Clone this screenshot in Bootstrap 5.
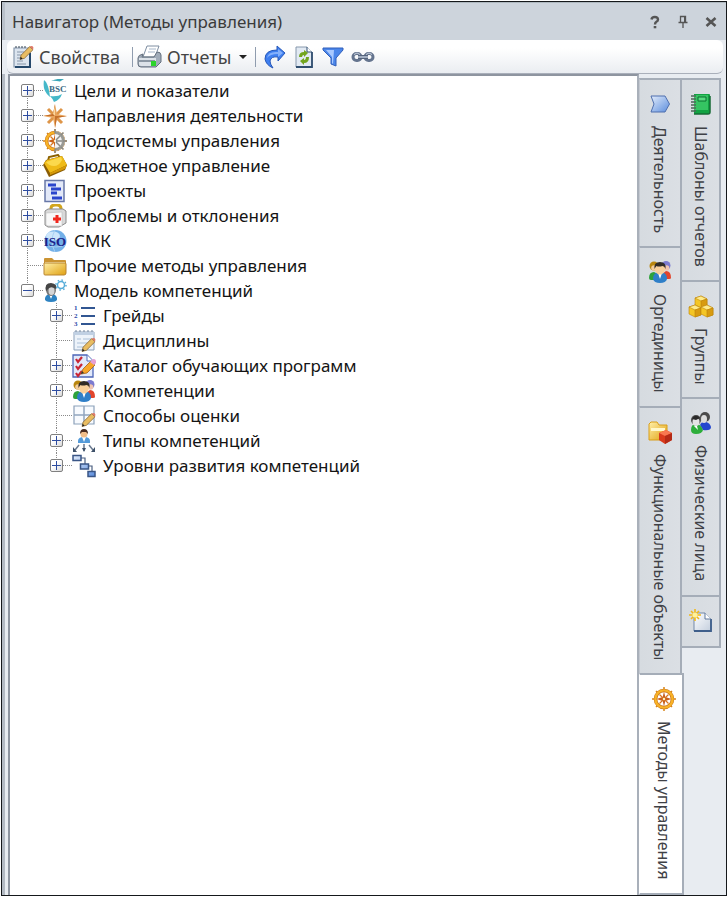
<!DOCTYPE html>
<html lang="ru">
<head>
<meta charset="utf-8">
<meta name="viewport" content="width=device-width, initial-scale=1">
<title>Навигатор (Методы управления)</title>
<link href="https://cdn.jsdelivr.net/npm/bootstrap@5.3.0/dist/css/bootstrap.min.css" rel="stylesheet">
<style>
body { font-family: "Noto Sans", "Open Sans", sans-serif; font-size: 17px; line-height: 24px; padding: 1px; background: #fff; }
.nav-window { min-height: calc(100vh - 3px); border: 1px solid #15181b; background: #e8ecf1; }
.title-bar { height: 38px; padding: 0 9px 0 7px; background: #cdd4dc; border-left: 3px solid #b9c1ca; border-top: 1px solid #aeb8bf; color: #3b3b3b; }
.title-bar h1 { font-size: 17px; line-height: 24px; font-weight: 400; }
.flat-btn { border: 0; background: none; padding: 0; color: inherit; }
.tools { height: 34px; margin: 0 3px 0 5px; padding: 0 5px; background: linear-gradient(#fff 25%, #eaedf1); border-bottom: 1px solid #a9afba; border-radius: 6px; color: #444; font-size: 18px; }
.tool-icons { gap: 7px; }
.rule { width: 1px; height: 20px; margin-left: 12px; background: #8f9cae; }
.rule-tight { margin-left: 8px; }
.work { padding-left: 6px; border-left: 0; background: linear-gradient(90deg, #b3bac3 0 3px, #e8ecf1 3px); }
.tree-pane { background: #fff; border: 2px solid #8e95a0; border-right-color: #a9b0ba; border-bottom: 0; padding: 2px 0 0 11px; color: #141414; }
.tree-row { height: 25px; }
.tree-row > svg { margin-right: 7px; }
.sub-tree { padding-left: 29px; }
.branch { width: 22px; height: 25px;
  background:
    repeating-linear-gradient(90deg, #8a8a8a 0 1px, transparent 1px 2px) 7px 12px / 15px 1px no-repeat,
    repeating-linear-gradient(#8a8a8a 0 1px, transparent 1px 2px) 6px 0 / 1px 25px no-repeat; }
.branch-first { background-position: 7px 12px, 6px 12px; }
.branch-last { background-size: 15px 1px, 1px 12px; }
.fold { width: 13px; height: 13px; border: 1px solid #808080; border-radius: 2px; padding: 0;
  background:
    linear-gradient(#2d4ca0, #2d4ca0) center / 9px 1px no-repeat,
    linear-gradient(135deg, #fff 40%, #d8d8d8); }
.fold-plus { background:
    linear-gradient(#2d4ca0, #2d4ca0) center / 9px 1px no-repeat,
    linear-gradient(#2d4ca0, #2d4ca0) center / 1px 9px no-repeat,
    linear-gradient(135deg, #fff 40%, #d8d8d8); }
.tab-strip { padding-top: 4px; }
.side-tab { width: 40px; padding: 12px 0 13px; gap: 10px; border: 2px solid #a5adb8; border-bottom-width: 0; border-left-width: 1px; background: linear-gradient(90deg, #d6dbe0, #dbdfe4); color: #3f4146; font-size: 16px; line-height: 20px; }
.side-tab:last-child { border-bottom-width: 2px; }
.strip-inner .side-tab { width: 43px; border-left-color: #c3c8d0; }
.strip-inner .side-tab-active { width: 45px; background: #fff; padding-left: 6px; border-left-color: #fff; }
.strip-outer { margin-left: -3px; padding-right: 5px; }
.upright { writing-mode: vertical-rl; }
</style>
<script src="https://cdn.jsdelivr.net/npm/bootstrap@5.3.0/dist/js/bootstrap.bundle.min.js"></script>
</head>
<body>
<svg width="0" height="0" class="position-absolute" aria-hidden="true">
  <defs>
    <linearGradient id="gGold" x1="0" y1="0" x2="1" y2="1"><stop offset="0" stop-color="#fff0a8"/><stop offset="1" stop-color="#e0a010"/></linearGradient>
    <linearGradient id="gBlue" x1="0" y1="0" x2="1" y2="1"><stop offset="0" stop-color="#e2ecfb"/><stop offset="1" stop-color="#5b8ddd"/></linearGradient>
    <linearGradient id="gPage" x1="0" y1="0" x2="1" y2="1"><stop offset="0" stop-color="#fff"/><stop offset="1" stop-color="#c3cedd"/></linearGradient>
  </defs>
  <symbol id="people" viewBox="0 0 24 24">
    <path d="M1 18q0-6 5-6l4 2v6H3q-2 0-2-2z" fill="#2ea23c"/><path d="M23 18q0-7-5-7l-4 3v5h7q2 0 2-1z" fill="#e2452c"/>
    <circle cx="6" cy="6" r="4.500" fill="#b8860f"/><circle cx="18" cy="5.500" r="4.500" fill="#7c7bd0"/>
    <circle cx="6" cy="8" r="2.800" fill="#f2cc9c"/><circle cx="18.500" cy="8" r="2.800" fill="#f0c4b0"/>
    <path d="M5 19q0-7 7-7t7 7q-1 4-7 4t-7-4z" fill="#2f7fc8"/><path d="M10 13h4l-2 6z" fill="#fff"/>
    <ellipse cx="12" cy="9" rx="5" ry="5.500" fill="#f8cf9a"/><path d="M6.500 9q-1-7 5.500-7t5.500 7q-1-3-3-3-4 1-6 0-1 1-2 3z" fill="#302b26"/>
  </symbol>
  <symbol id="helm" viewBox="0 0 24 24">
    <path d="M12 0v24M0 12h24M4 4l16 16M20 4 4 20" stroke="#d9861c" stroke-width="1.500"/>
    <circle cx="12" cy="12" r="8.500" fill="#fff" stroke="#c9761a" stroke-width="3.600"/><circle cx="12" cy="12" r="8.600" fill="none" stroke="#f8b226" stroke-width="2.400"/>
    <path d="M12 4.500l1.300 5.500 6.200 2-6.200 2L12 19.500 10.700 14l-6.200-2 6.200-2z" fill="#c8601c"/>
    <path d="M7.500 7.500l9 9M16.500 7.500l-9 9" stroke="#d8741e" stroke-width="1.200"/><circle cx="12" cy="12" r="1.200" fill="#fff2c0"/>
  </symbol>
  <symbol id="pencil" viewBox="0 0 14 14">
    <path d="M1 13l1-4 8-8 3 3-8 8z" fill="#e9bd62" stroke="#8c6a35" stroke-width=".8"/><path d="M10 1q2-1 3 0t0 3z" fill="#e07868"/><path d="M1 13l.6-2.400L3.400 12.400z" fill="#222"/>
  </symbol>
</svg>

<main class="nav-window d-flex flex-column">
  <header class="title-bar d-flex align-items-center">
    <h1 class="mb-0 me-auto">Навигатор (Методы управления)</h1>
    <div class="d-flex align-items-center gap-3">
      <button class="flat-btn d-flex" aria-label="Справка"><svg width="12" height="16" viewBox="0 0 12 16"><path d="M2.500 5.500q.3-2.500 3.300-2.500T9 5.500Q9 7 7.400 7.800 6 8.600 6 10.500" fill="none" stroke="#555" stroke-width="2.400"/><path d="M4.700 12h2.600v2.300H4.700z" fill="#555"/></svg></button>
      <button class="flat-btn d-flex" aria-label="Закрепить"><svg width="12" height="16" viewBox="0 0 12 16"><path d="M3.500 8V2.500h5V8M1.500 8.500h9M6 9v5" fill="none" stroke="#555" stroke-width="1.300"/><path d="M7 2.500h2V8H7z" fill="#555"/></svg></button>
      <button class="flat-btn d-flex" aria-label="Закрыть"><svg width="12" height="16" viewBox="0 0 12 16"><path d="M1.500 4l9 8M10.500 4l-9 8" stroke="#555" stroke-width="2.600"/></svg></button>
    </div>
  </header>

  <div class="tools d-flex align-items-center" role="toolbar" aria-label="Инструменты">
    <button class="flat-btn d-flex align-items-center gap-1">
      <svg width="23" height="24" viewBox="0 0 23 24"><path d="M2 3h16v19H2z" fill="#dce5ef" stroke="#8798ad" stroke-width="1.200"/><path d="M4 3V1M7 3V1M10 3V1M13 3V1" stroke="#345"/><path d="M5 7h7M5 10h5M5 13h5M5 16h6M5 19h9" stroke="#8796a9"/><path d="M18 8v14H3" fill="none" stroke="#25486b" stroke-width="2"/><use href="#pencil" x="7" y="0" width="15" height="16"/></svg>
      <span>Свойства</span>
    </button>
    <span class="rule"></span>
    <button class="flat-btn d-flex align-items-center gap-1 ms-1">
      <svg width="26" height="24" viewBox="0 0 26 24"><path d="M10 1h12l-4 11H6z" fill="#fff" stroke="#7e8ea1"/><path d="M12 4h7M11 7h7" stroke="#a6b6c9"/><path d="M1 13q0-3 5-4l-1 3h12l3-5q4 0 4 3v7l-5 5H4q-3 0-3-3z" fill="#a1acb9" stroke="#65707e"/><path d="M2 13h17v8H4q-2 0-2-2z" fill="#dce2e8"/><path d="M2 16h16" stroke="#717e8d" stroke-width="1.500"/><path d="M14 16h5v5h-5z" fill="#2bd52b"/></svg>
      <span>Отчеты</span>
      <svg class="ms-1" width="8" height="6" viewBox="0 0 8 6"><path d="M0 1h8L4 5z" fill="#222"/></svg>
    </button>
    <span class="rule rule-tight"></span>
    <div class="tool-icons d-flex align-items-center ms-2">
      <button class="flat-btn d-flex" aria-label="Перейти"><svg width="22" height="24" viewBox="0 0 22 24"><path d="M13 1l8 7-7 8v-4q-7-1-8 4 0 3 3 7-7-3-8-9 0-9 12-9z" fill="#3f7ff0" stroke="#2758b8"/><path d="M14 4l5 4-5 4V9q-8 0-11 4Q4 6 14 7z" fill="#84b0fb"/></svg></button>
      <button class="flat-btn d-flex" aria-label="Обновить"><svg width="22" height="24" viewBox="0 0 22 24"><path d="M3 2h11l5 5v15H3z" fill="#e2eaf3" stroke="#8798ad"/><path d="M19 7v15H3" fill="none" stroke="#314f70" stroke-width="1.800"/><path d="M14 2v5h5" fill="#fff" stroke="#314f70"/><path d="M6 12q0-5 5-5V5l4 3-4 4v-2q-2 0-2 2zM16 12q0 6-5 6v2l-4-4 4-3v2q2 0 2-3z" fill="#72a51e"/></svg></button>
      <button class="flat-btn d-flex" aria-label="Фильтр"><svg width="22" height="24" viewBox="0 0 22 24"><path d="M1 3h20v2l-7 8v8l-5-2v-6L1 5z" fill="#4b86ea" stroke="#315fba"/><path d="M4 5h8l-1 14-1-1v-6z" fill="#a9c9ff"/></svg></button>
      <button class="flat-btn d-flex" aria-label="Связь"><svg width="24" height="24" viewBox="0 0 24 24"><g fill="none" stroke="#65758f" stroke-width="3"><rect x="2" y="8.500" width="8" height="7" rx="3.500"/><rect x="14" y="8.500" width="8" height="7" rx="3.500"/></g><path d="M7 12h10" stroke="#56647c" stroke-width="4"/><path d="M7 12h10" stroke="#a3afc2" stroke-width="2"/><path d="M3 9.500q3-3 6 0M15 9.500q3-3 6 0" fill="none" stroke="#c8d0de"/></svg></button>
    </div>
  </div>

  <div class="work d-flex flex-grow-1">
    <section class="tree-pane flex-grow-1" aria-label="Дерево">
      <ul class="list-unstyled mb-0">
        <li class="tree-row d-flex align-items-center"><span class="branch branch-first d-flex align-items-center"><button class="fold fold-plus" aria-label="Развернуть"></button></span>
          <svg width="24" height="24" viewBox="0 0 24 24"><path d="M1 1q-2 11 6 17-1-10-4-15z" fill="#45b8c9"/><path d="M8 2q7-3 13-2l-4 2.500q-5-1-9-.5z" fill="#3aa6b8"/><path d="M7 17q8 1 12-2-2 6-8 8-1-3-4-6z" fill="#45b8c9"/><text x="6" y="13" font-family="Liberation Serif, serif" font-size="9" font-weight="700" fill="#3c6a84">BSC</text></svg>
          <span>Цели и показатели</span></li>
        <li class="tree-row d-flex align-items-center"><span class="branch d-flex align-items-center"><button class="fold fold-plus" aria-label="Развернуть"></button></span>
          <svg width="24" height="24" viewBox="0 0 24 24"><path d="M5 5l14 14M19 5 5 19" stroke="#de9548" stroke-width="3"/><path d="M12 0l2 10 10 2-10 2-2 10-2-10-10-2 10-2z" fill="#e8a45c"/><path d="M12 0v12h12l-10 2-2 10V12H0l10-2z" fill="#c5702b"/><path d="M12 12V2l-2 8z" fill="#fbd79e"/></svg>
          <span>Направления деятельности</span></li>
        <li class="tree-row d-flex align-items-center"><span class="branch d-flex align-items-center"><button class="fold fold-plus" aria-label="Развернуть"></button></span>
          <svg width="24" height="24" viewBox="0 0 24 24"><use href="#helm" width="24" height="24"/><path d="M12 2a10 10 0 0 1 0 20z" fill="#f4f4f4"/><path d="M12 3.500a8.500 8.500 0 0 1 0 17" fill="none" stroke="#9a9a94" stroke-width="3"/><path d="M12 0v4M18 6l2.500-2.500M20 12h4M18 18l2.500 2.500M12 20v4M13 11l4-4M13 12h6M13 13l4 4" stroke="#8b8b86" stroke-width="1.500"/></svg>
          <span>Подсистемы управления</span></li>
        <li class="tree-row d-flex align-items-center"><span class="branch d-flex align-items-center"><button class="fold fold-plus" aria-label="Развернуть"></button></span>
          <svg width="24" height="24" viewBox="0 0 24 24"><path d="M5 7l1-4 9-2 3 4" fill="none" stroke="#8c6100" stroke-width="2"/><path d="M0 11L3 6l16-4 5 9-2 5-16 7z" fill="#8a5d05"/><path d="M1 9l3-3 15-4 5 9-17 8z" fill="#efbb18"/><path d="M3 8l15-5 1 3q-3 6-8 6Q6 12 3 8z" fill="#fbd94c"/><path d="M7 19l17-8-2 4-15 6z" fill="#d69a08"/></svg>
          <span>Бюджетное управление</span></li>
        <li class="tree-row d-flex align-items-center"><span class="branch d-flex align-items-center"><button class="fold fold-plus" aria-label="Развернуть"></button></span>
          <svg width="24" height="24" viewBox="0 0 24 24"><path d="M2 1.500h19v21H2z" fill="#e3e9f8" stroke="#6878a8" stroke-width="1.500"/><path d="M5 6h8M8 10h10M8 14h6M9 19h10" stroke="#2b45cc" stroke-width="3"/></svg>
          <span>Проекты</span></li>
        <li class="tree-row d-flex align-items-center"><span class="branch d-flex align-items-center"><button class="fold fold-plus" aria-label="Развернуть"></button></span>
          <svg width="24" height="24" viewBox="0 0 24 24"><path d="M8 7V4q0-3 4-3h2q4 0 4 4v2" fill="none" stroke="#d2a51c" stroke-width="3"/><path d="M2 7l3-2h15l3 2v12l-7 4H5l-3-2z" fill="#d9d9d9" stroke="#8b8b8b"/><path d="M3 9l16-1v14H5l-2-1z" fill="#f8f8f8" stroke="#b5b5b5" stroke-width=".5"/><path d="M14 11v8M10 15h8" stroke="#f0281e" stroke-width="3"/></svg>
          <span>Проблемы и отклонения</span></li>
        <li class="tree-row d-flex align-items-center"><span class="branch d-flex align-items-center"><button class="fold fold-plus" aria-label="Развернуть"></button></span>
          <svg width="24" height="24" viewBox="0 0 24 24"><circle cx="12.500" cy="12" r="11" fill="#73b0e8"/><ellipse cx="10" cy="7" rx="7" ry="4.500" fill="#cde6fb"/><path d="M3 16q10 4 19 0M12 1q-6 11 0 22" fill="none" stroke="#a7d1f4"/><text x="12" y="17" text-anchor="middle" font-family="Liberation Serif, serif" font-size="13" font-weight="700" fill="#1d1f8a">ISO</text></svg>
          <span>СМК</span></li>
        <li class="tree-row d-flex align-items-center"><span class="branch"></span>
          <svg width="24" height="24" viewBox="0 0 24 24"><path d="M1 5q0-1 1-1h7l2 2h11q1 0 1 1v13H1z" fill="#cb9433"/><path d="M2 8h20v3H2z" fill="#fff1bd"/><path d="M1 9h21q1 0 1 1v9q0 2-2 2H2q-1 0-1-1z" fill="url(#gGold)" stroke="#b98531"/></svg>
          <span>Прочие методы управления</span></li>
        <li>
          <div class="tree-row d-flex align-items-center"><span class="branch branch-last d-flex align-items-center"><button class="fold" aria-label="Свернуть"></button></span>
            <svg width="24" height="24" viewBox="0 0 24 24"><path d="M2 19q1-4 6-4t6 4q1 4-6 4t-6-4z" fill="#2e83c2"/><path d="M6 15h4l-2 5z" fill="#fff"/><ellipse cx="8" cy="11" rx="5" ry="6" fill="#777"/><ellipse cx="8.500" cy="12" rx="3" ry="4" fill="#d6d6d6"/><path d="M3 12q-2-8 5-8 7 1 5 6-4-3-7-1z" fill="#444"/><circle cx="18" cy="6" r="3.500" fill="#fff" stroke="#56acd8" stroke-width="1.500"/><circle cx="18" cy="6" r="5" fill="none" stroke="#56acd8" stroke-width="1.500" stroke-dasharray="1.500 2.400"/></svg>
            <span>Модель компетенций</span></div>
          <ul class="list-unstyled sub-tree mb-0">
            <li class="tree-row d-flex align-items-center"><span class="branch d-flex align-items-center"><button class="fold fold-plus" aria-label="Развернуть"></button></span>
              <svg width="24" height="24" viewBox="0 0 24 24"><path d="M9 4h14M9 12h14M9 20h14" stroke="#315692" stroke-width="2"/><g fill="#2b48a8" font-family="Liberation Serif, serif" font-size="7" font-weight="700"><text x="2" y="6">1</text><text x="2" y="14">2</text><text x="2" y="22">3</text></g></svg>
              <span>Грейды</span></li>
            <li class="tree-row d-flex align-items-center"><span class="branch"></span>
              <svg width="24" height="24" viewBox="0 0 24 24"><path d="M2 3h20v18H2z" fill="#edf3fa" stroke="#8ca1ba"/><path d="M2 3h20v3H2z" fill="#c0d0e3"/><path d="M4 3V1M8 3V1M12 3V1M16 3V1M20 3V1" stroke="#71859e"/><path d="M5 10h4M11 10h8M5 14h12M5 18h7" stroke="#abc0d8"/><use href="#pencil" x="9" y="8" width="15" height="16"/></svg>
              <span>Дисциплины</span></li>
            <li class="tree-row d-flex align-items-center"><span class="branch d-flex align-items-center"><button class="fold fold-plus" aria-label="Развернуть"></button></span>
              <svg width="24" height="24" viewBox="0 0 24 24"><path d="M1 1h14l6 6v16H1z" fill="#e2e9fa" stroke="#4d66b8" stroke-width="1.300"/><path d="M15 1v6h6" fill="#fff" stroke="#4d66b8"/><path d="M4 5l2 3 4-5M4 12l2 3 4-5M4 19l2 3 4-5" fill="none" stroke="#c92636" stroke-width="2.200"/><path d="M9 20l2-5 8-8 4 4-8 8z" fill="#f7a62a" stroke="#a36017" stroke-width=".8"/><path d="M18 8l3-3q4 0 3 4l-2 2z" fill="#e6a0d4"/><path d="M9 20l1-3 2 2z" fill="#333"/></svg>
              <span>Каталог обучающих программ</span></li>
            <li class="tree-row d-flex align-items-center"><span class="branch d-flex align-items-center"><button class="fold fold-plus" aria-label="Развернуть"></button></span>
              <svg width="24" height="24"><use href="#people" width="24" height="24"/></svg>
              <span>Компетенции</span></li>
            <li class="tree-row d-flex align-items-center"><span class="branch"></span>
              <svg width="24" height="24" viewBox="0 0 24 24"><path d="M2 2h20v18H2z" fill="#f7fafe" stroke="#8ca1ba" stroke-width="1.200"/><path d="M12 2v18M2 11h20" stroke="#91a5bf" stroke-width="1.500"/><use href="#pencil" x="9" y="8" width="15" height="16"/></svg>
              <span>Способы оценки</span></li>
            <li class="tree-row d-flex align-items-center"><span class="branch d-flex align-items-center"><button class="fold fold-plus" aria-label="Развернуть"></button></span>
              <svg width="24" height="24" viewBox="0 0 24 24"><path d="M6 12q0-4 6-4t6 4v2H6z" fill="#559bd9"/><path d="M10 8h4l-2 5z" fill="#fff"/><circle cx="12" cy="5" r="3.500" fill="#f1bd88"/><path d="M8 5q0-5 4-5t4 5l-2-2h-4z" fill="#4a2c1f"/><path d="M7 16l-4 5M12 15v7M17 16l4 5" stroke="#6b7a90" stroke-width="1.500"/><path d="M1 18v5h4zM10 19h4l-2 4zM23 18v5h-4z" fill="#3d5068"/></svg>
              <span>Типы компетенций</span></li>
            <li class="tree-row d-flex align-items-center"><span class="branch branch-last d-flex align-items-center"><button class="fold fold-plus" aria-label="Развернуть"></button></span>
              <svg width="24" height="24" viewBox="0 0 24 24"><path d="M9 4h4v8M17 12h3v7" fill="none" stroke="#4b5f80" stroke-width="1.200"/><g fill="url(#gBlue)" stroke="#3a5686" stroke-width="1.500"><path d="M1 1.500h8v5H1zM8.500 10h8v5h-8zM16 17.500h7v5h-7z"/></g></svg>
              <span>Уровни развития компетенций</span></li>
          </ul>
        </li>
      </ul>
    </section>

    <nav class="d-flex align-items-start" aria-label="Разделы">
      <div class="tab-strip strip-inner d-flex flex-column" role="tablist">
        <button class="side-tab d-flex flex-column align-items-center" role="tab"><svg width="24" height="24" viewBox="0 0 24 24"><path d="M3 4h14l4.500 8-4.500 8H3l3-8z" fill="url(#gBlue)" stroke="#4f6fae"/></svg><span class="upright">Деятельность</span></button>
        <button class="side-tab d-flex flex-column align-items-center" role="tab"><svg width="24" height="24"><use href="#people" width="24" height="24"/></svg><span class="upright">Оргединицы</span></button>
        <button class="side-tab d-flex flex-column align-items-center" role="tab"><svg width="24" height="24" viewBox="0 0 24 24"><path d="M1 4l2-2h6l2 3h8v15H1z" fill="url(#gGold)" stroke="#d99e18"/><path d="M3 8h14v3H3z" fill="#fff8cd"/><path d="M11 13l7-3 6 3v7l-7 4-6-4z" fill="#d93a1c"/><path d="M11 13l7-3 6 3-7 3z" fill="#f87850"/><path d="M17 16l7-3v7l-7 4z" fill="#b42a16"/></svg><span class="upright">Функциональные объекты</span></button>
        <button class="side-tab side-tab-active d-flex flex-column align-items-center" role="tab" aria-selected="true"><svg width="24" height="24"><use href="#helm" width="24" height="24"/></svg><span class="upright">Методы управления</span></button>
      </div>
      <div class="tab-strip strip-outer d-flex flex-column" role="tablist">
        <button class="side-tab d-flex flex-column align-items-center" role="tab"><svg width="24" height="24" viewBox="0 0 24 24"><path d="M5 2h15q1 0 1 1v17q0 2-2 2H5z" fill="#12a343"/><path d="M5 3h14v15H5z" fill="#35c462"/><path d="M9 5h8v4H9z" fill="#5adb82" stroke="#0b7030"/><path d="M5 22h14q2 0 2-2V4" fill="none" stroke="#176b36" stroke-width="1.500"/><path d="M2 4h5M2 7h5M2 10h5M2 13h5M2 16h5M2 19h5" stroke="#4f655a" stroke-width="1.400"/></svg><span class="upright">Шаблоны отчетов</span></button>
        <button class="side-tab d-flex flex-column align-items-center" role="tab"><svg width="26" height="24" viewBox="0 0 26 24"><g stroke="#bd850b" stroke-width=".6"><g id="cube"><path d="M7 4l6-2 6 3v7l-6 2-6-3z" fill="#f4c625"/><path d="M7 4l6-2 6 3-6 2z" fill="#ffeb8a"/><path d="M13 7l6-2v7l-6 2z" fill="#d89b10"/></g><use href="#cube" x="-6" y="9"/><use href="#cube" x="6" y="9"/></g></svg><span class="upright">Группы</span></button>
        <button class="side-tab d-flex flex-column align-items-center" role="tab"><svg width="24" height="24" viewBox="0 0 24 24"><path d="M11 14q2-4 6-3t5 5q0 4-8 3z" fill="#2447cf"/><circle cx="16" cy="6" r="5" fill="#4b4b4b"/><ellipse cx="15" cy="8" rx="3" ry="4" fill="#ddd"/><path d="M2 19q0-6 5-6t7 6q-1 4-7 4-5 0-5-4z" fill="#2dae3b"/><path d="M5 15h3l1 4z" fill="#fff"/><circle cx="7" cy="9" r="5" fill="#4b4b4b"/><ellipse cx="7" cy="11" rx="3.500" ry="4" fill="#e4e4e4"/><path d="M3 8q3-6 8-1l-4 2z" fill="#292929"/></svg><span class="upright">Физические лица</span></button>
        <button class="side-tab d-flex flex-column align-items-center" role="tab" aria-label="Новый"><svg width="24" height="24" viewBox="0 0 24 24"><path d="M5 4h11l6 6v12H5z" fill="url(#gPage)" stroke="#7388a8"/><path d="M22 10v12H5" fill="none" stroke="#3f5f8b" stroke-width="1.800"/><path d="M16 4v6h6" fill="#fff" stroke="#61799b"/><path d="M6 0v12M0 6h12M2 2l8 8M10 2l-8 8" stroke="#f2b818" stroke-width="1.600"/><circle cx="6" cy="6" r="2.500" fill="#fff29a"/></svg></button>
      </div>
    </nav>
  </div>
</main>
</body>
</html>
